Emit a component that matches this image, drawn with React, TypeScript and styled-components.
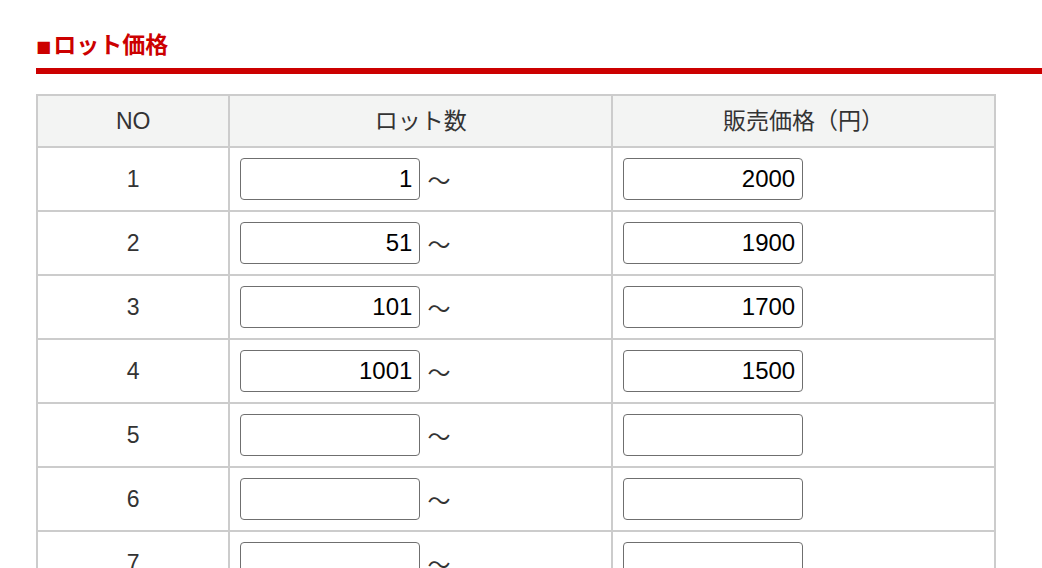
import styled, { createGlobalStyle } from 'styled-components';

const GlobalStyle = createGlobalStyle`
  body {
    margin: 0;
    background: #fff;
    font-family: 'Liberation Sans', 'Noto Sans CJK JP', sans-serif;
    color: #333;
  }
`;

const Page = styled.div`
  padding: 25px 0 0 36px;
  overflow: hidden;
`;

const Heading = styled.h2`
  margin: 0 0 20px;
  width: 1200px;
  height: 36px;
  padding-bottom: 7px;
  border-bottom: 6px solid #cc0000;
  color: #cc0000;
  font-size: 23px;
  font-weight: 700;
  line-height: 36px;
  font-family: 'Noto Sans CJK JP', sans-serif;
`;

const Mark = styled.span`
  font-family: 'DejaVu Sans', sans-serif;
  font-size: 16px;
  line-height: 1;
  margin-right: 2px;
  vertical-align: 1px;
`;

const PriceTable = styled.table`
  width: 960px;
  table-layout: fixed;
  border-collapse: collapse;
  border: 2px solid #ccc;
`;

const HeadCell = styled.th<{ $w: string }>`
  width: ${({ $w }) => $w};
  padding: 0;
  border: 2px solid #ccc;
  background: #f3f4f3;
  font-weight: 400;
  font-size: 23px;
  line-height: 50px;
  color: #333;
  text-align: center;
`;

const Cell = styled.td<{ $center?: boolean }>`
  padding: 10px;
  border: 2px solid #ccc;
  font-size: 23px;
  color: #333;
  text-align: ${({ $center }) => ($center ? 'center' : 'left')};
  vertical-align: middle;
`;

const InputRow = styled.div`
  display: flex;
  align-items: center;
  gap: 7px;
`;

const NumInput = styled.input`
  box-sizing: border-box;
  width: 180px;
  height: 42px;
  padding: 0 7px;
  border: 1px solid #6f6f6f;
  border-radius: 4px;
  background: #fff;
  font-family: 'Liberation Sans', 'Noto Sans CJK JP', sans-serif;
  font-size: 24px;
  color: #000;
  text-align: right;
`;

const Tilde = styled.span`
  font-family: 'Noto Sans CJK JP', sans-serif;
  font-size: 23px;
  color: #333;
`;

const rows = [
  { lot: '1', price: '2000' },
  { lot: '51', price: '1900' },
  { lot: '101', price: '1700' },
  { lot: '1001', price: '1500' },
  { lot: '', price: '' },
  { lot: '', price: '' },
  { lot: '', price: '' },
  { lot: '', price: '' },
  { lot: '', price: '' },
  { lot: '', price: '' },
];

function App() {
  return (
    <Page>
      <GlobalStyle />
      <Heading>
        <Mark>■</Mark>ロット価格
      </Heading>
      <PriceTable>
        <thead>
          <tr>
            <HeadCell $w='20%'>NO</HeadCell>
            <HeadCell $w='40%'>ロット数</HeadCell>
            <HeadCell $w='40%'>販売価格（円）</HeadCell>
          </tr>
        </thead>
        <tbody>
          {rows.map((row, index) => (
            <tr key={index}>
              <Cell $center>{index + 1}</Cell>
              <Cell>
                <InputRow>
                  <NumInput type='text' defaultValue={row.lot} />
                  <Tilde>〜</Tilde>
                </InputRow>
              </Cell>
              <Cell>
                <NumInput type='text' defaultValue={row.price} />
              </Cell>
            </tr>
          ))}
        </tbody>
      </PriceTable>
    </Page>
  );
}

export default App;
